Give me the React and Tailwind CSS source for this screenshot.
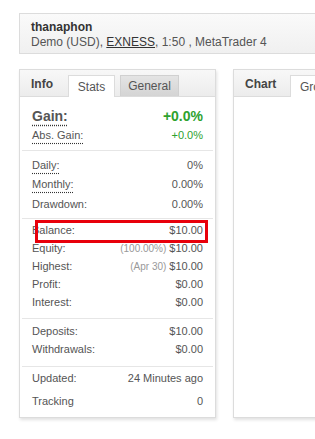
import React from 'react';

const font = { fontFamily: 'Tahoma, "Liberation Sans", Arial, sans-serif' };

const Label = ({ children, dotted }) => (
    <span className={dotted ? 'underline decoration-dotted decoration-[#333] underline-offset-[4px]' : ''}>
        {children}
    </span>
);

const Row = ({ label, value, note, dotted, className = 'h-[18px]' }) => (
    <div className={`flex items-center justify-between px-[10px] ${className}`}>
        <Label dotted={dotted}>{label}</Label>
        <span>
            {note && <span className="text-[10px] text-[#999] mr-[3px]">{note}</span>}
            {value}
        </span>
    </div>
);

const Section = ({ children, last, className = 'py-[6px]' }) => (
    <div className={`${className} ${last ? '' : 'border-b border-[#e6e6e6]'}`}>{children}</div>
);

const TabBar = ({ title, children }) => (
    <div className="flex items-end h-[27px] border-b border-[#dcdcdc] bg-gradient-to-b from-[#f8f8f8] to-[#ececec] pl-[11px]">
        <span className="w-[37px] pb-[4px] leading-[16px] text-[12px] font-bold text-[#444]">{title}</span>
        {children}
    </div>
);

export default function App() {
    return (
        <div className="w-[315px] h-[439px] overflow-hidden bg-white text-[11px] text-[#555]" style={font}>
            <div className="pl-[19px] pt-[13px] w-[520px]">
                <div className="h-[41px] border border-[#dcdcdc] bg-gradient-to-b from-[#fafafa] to-[#f0f0f0] pl-[11px] pt-[6px]" style={{ fontFamily: '"Liberation Sans", Arial, sans-serif' }}>
                    <div className="text-[12px] font-bold text-[#333] leading-[14px]">thanaphon</div>
                    <div className="text-[12px] text-[#555] leading-[16px]">
                        Demo (USD), <span className="underline text-[#333]">EXNESS</span>, 1:50 , MetaTrader 4
                    </div>
                </div>

                <div className="flex gap-[17px] mt-[15px]">
                    <div className="w-[197px] h-[349px] border border-[#dcdcdc] bg-white shadow-[1px_2px_3px_rgba(0,0,0,0.12)]">
                        <TabBar title="Info">
                            <div className="w-[47px] h-[22px] -mb-px border border-b-0 border-[#dcdcdc] bg-white flex items-center justify-center text-[12px] text-[#555]">
                                Stats
                            </div>
                            <div className="ml-[5px] w-[59px] h-[21px] border border-b-0 border-[#d0d0d0] bg-gradient-to-b from-[#e4e4e4] to-[#d4d4d4] flex items-center justify-center text-[12px] text-[#555]">
                                General
                            </div>
                        </TabBar>

                        <div className="px-[2px]">
                            <Section className="pt-[9px] pb-[6px]">
                                <div className="flex items-center justify-between px-[10px] h-[20px] text-[14px] font-bold">
                                    <Label dotted>Gain:</Label>
                                    <span className="text-[#2ea22e]">+0.0%</span>
                                </div>
                                <div className="flex items-center justify-between px-[10px] h-[18px]">
                                    <Label dotted>Abs. Gain:</Label>
                                    <span className="text-[#2ea22e]">+0.0%</span>
                                </div>
                            </Section>
                            <Section className="pt-[4px] pb-[4px]">
                                <Row dotted label="Daily:" value="0%" className="h-[19.5px]" />
                                <Row dotted label="Monthly:" value="0.00%" className="h-[19.5px]" />
                                <Row label="Drawdown:" value="0.00%" className="h-[19.5px]" />
                            </Section>
                            <Section className="pt-[3px] pb-[6px]">
                                <div className="relative">
                                    <Row label="Balance:" value="$10.00" />
                                    <div className="absolute left-[13px] top-[-2px] w-[173px] h-[23px] border-[3px] border-[#e8000b]" />
                                </div>
                                <Row label="Equity:" note="(100.00%)" value="$10.00" />
                                <Row label="Highest:" note="(Apr 30)" value="$10.00" />
                                <Row label="Profit:" value="$0.00" />
                                <Row label="Interest:" value="$0.00" />
                            </Section>
                            <Section className="pt-[4px] pb-[7px]">
                                <Row label="Deposits:" value="$10.00" />
                                <Row label="Withdrawals:" value="$0.00" />
                            </Section>
                            <Section last className="pt-[1px]">
                                <Row label="Updated:" value="24 Minutes ago" className="h-[22px]" />
                                <Row label="Tracking" value="0" className="h-[23px]" />
                            </Section>
                        </div>
                    </div>

                    <div className="w-[250px] h-[349px] border border-[#dcdcdc] bg-white shadow-[1px_2px_3px_rgba(0,0,0,0.12)]">
                        <TabBar title="Chart">
                            <div className="ml-[8px] w-[60px] h-[22px] -mb-px border border-b-0 border-[#dcdcdc] bg-white flex items-center pl-[9px] text-[12px] text-[#555]">
                                Growth
                            </div>
                        </TabBar>
                    </div>
                </div>
            </div>
        </div>
    );
}
